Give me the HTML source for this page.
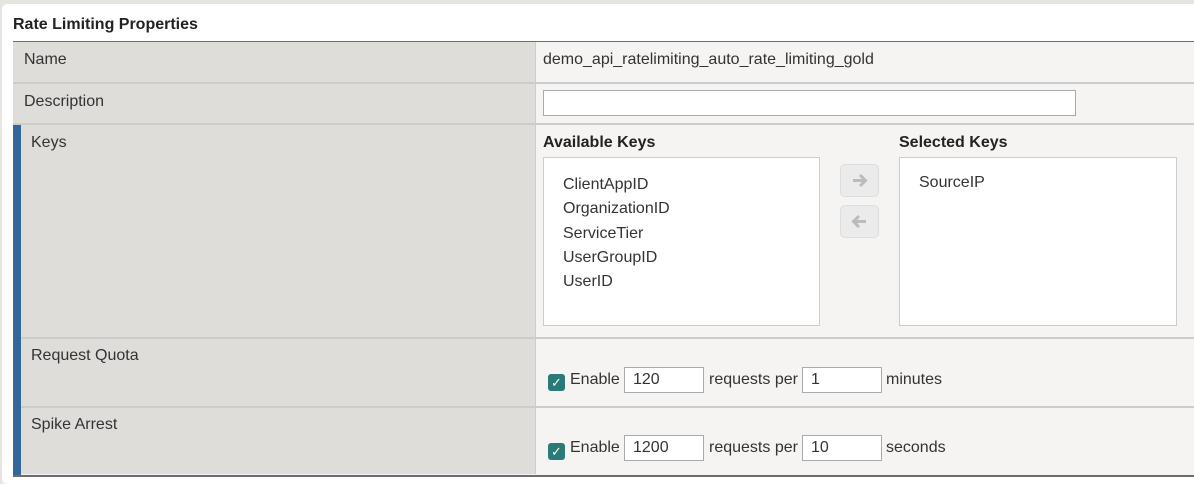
<!DOCTYPE html>
<html><head><style>
body{margin:0;width:1194px;height:481px;background:#e6e5e2;font-family:"Liberation Sans",sans-serif;color:#333;font-size:16px;position:relative;overflow:hidden}
.a{position:absolute}
.panel{left:2px;top:4px;width:1200px;height:480px;background:#fff;border-radius:5px}
.tbl{left:13px;top:41px;width:1181px;height:433px;border-top:1px solid #6c6c6c;border-bottom:2px solid #6c6c6c;border-left:1px solid #6c6c6c;background:#f5f4f2}
.lc{left:13px;width:522px;background:#dfddda;border-right:1px solid #ccc}
.hr{left:13px;width:1181px;height:2px;background:#ccc}
.bar{left:13px;width:8px;background:#336699}
input.t{position:absolute;height:24px;border:1px solid #aaa;background:#fff;box-sizing:border-box;font:16px "Liberation Sans",sans-serif;color:#333;padding:0 8px}
.box{background:#fff;border:1px solid #ccc;box-sizing:border-box}
.btn{width:39px;height:33px;border:1px solid #ddd;border-radius:5px;background:#ebebeb;box-sizing:border-box}
.cb{width:17px;height:17px;background:#2a7a77;border-radius:3px;color:#fff;font-size:13px;text-align:center;line-height:17px}
</style></head><body>
<div class="a panel"></div>
<div class="a" style="left:13px;top:16px;font-weight:bold;font-size:16px;color:#222">Rate Limiting Properties</div>
<div class="a tbl"></div>
<div class="a lc" style="top:42px;height:432px"></div>
<div class="a hr" style="top:82px"></div>
<div class="a hr" style="top:123px"></div>
<div class="a hr" style="top:337px"></div>
<div class="a hr" style="top:406px"></div>
<div class="a bar" style="top:125px;height:350px"></div>
<div class="a" style="left:24px;top:51px">Name</div>
<div class="a" style="left:24px;top:93px">Description</div>
<div class="a" style="left:31px;top:134px">Keys</div>
<div class="a" style="left:31px;top:347px">Request Quota</div>
<div class="a" style="left:31px;top:416px">Spike Arrest</div>
<div class="a" style="left:543px;top:51px">demo_api_ratelimiting_auto_rate_limiting_gold</div>
<input class="t" style="left:543px;top:90px;width:533px;height:26px" value="">
<div class="a" style="left:543px;top:134px;font-weight:bold;color:#222">Available Keys</div>
<div class="a" style="left:899px;top:134px;font-weight:bold;color:#222">Selected Keys</div>
<div class="a box" style="left:543px;top:157px;width:277px;height:169px"></div>
<div class="a" style="left:563px;top:173px;line-height:24.3px">ClientAppID<br>OrganizationID<br>ServiceTier<br>UserGroupID<br>UserID</div>
<div class="a box" style="left:899px;top:157px;width:278px;height:169px"></div>
<div class="a" style="left:919px;top:174px">SourceIP</div>
<div class="a btn" style="left:840px;top:164px"><svg width="37" height="31" viewBox="0 0 37 31"><path d="M12 15.5h12M19 10l5.5 5.5L19 21" stroke="#bbb" stroke-width="3" fill="none"/></svg></div>
<div class="a btn" style="left:840px;top:205px"><svg width="37" height="31" viewBox="0 0 37 31"><path d="M25 15.5H13M18 10l-5.5 5.5L18 21" stroke="#bbb" stroke-width="3" fill="none"/></svg></div>
<div class="a cb" style="left:548px;top:374px">&#10003;</div>
<div class="a" style="left:570px;top:371px">Enable</div>
<input class="t" style="left:624px;top:367px;width:80px;height:26px" value="120">
<div class="a" style="left:709px;top:371px">requests per</div>
<input class="t" style="left:802px;top:367px;width:80px;height:26px" value="1">
<div class="a" style="left:886px;top:371px">minutes</div>
<div class="a cb" style="left:548px;top:443px">&#10003;</div>
<div class="a" style="left:570px;top:439px">Enable</div>
<input class="t" style="left:624px;top:435px;width:80px;height:26px" value="1200">
<div class="a" style="left:709px;top:439px">requests per</div>
<input class="t" style="left:802px;top:435px;width:80px;height:26px" value="10">
<div class="a" style="left:886px;top:439px">seconds</div>
</body></html>
